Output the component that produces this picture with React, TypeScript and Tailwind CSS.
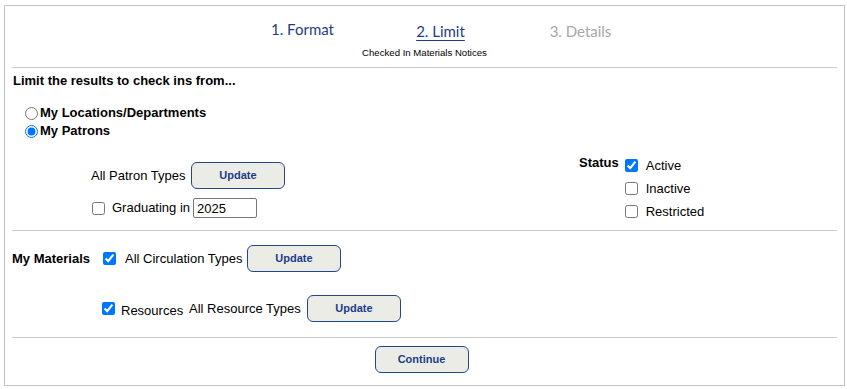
import React from "react";

const Btn = ({ label }: { label: string }) => (
  <button className="w-[94px] h-[27px] rounded-[6px] border border-[#23458f] bg-[#ecece7] text-[11px] font-bold text-[#1d3d87] leading-none [font-family:'Liberation_Sans',Arial,sans-serif]">
    {label}
  </button>
);

const Cb = ({ checked }: { checked?: boolean }) => (
  <input type="checkbox" defaultChecked={checked} className="m-0 w-[13px] h-[13px] shrink-0" />
);

export default function App() {
  return (
    <div className="bg-white w-[847px] h-[389px] pt-[5px] pl-[4px] text-[13px] text-black [font-family:'Liberation_Sans',Arial,sans-serif]">
      <div className="w-[841px] h-[381px] border border-[#c2c2c2] flex flex-col">
        {/* header */}
        <div className="pt-[16px] flex flex-col items-center">
          <div className="flex pl-[32px] text-[15px] leading-[18px] [font-family:Lato,sans-serif]">
            <div className="w-[138px] text-center text-[#1d3d87] -translate-y-[2px]">1. Format</div>
            <div className="w-[138px] text-center text-[#1d3d87]"><span className="underline underline-offset-[3px]">2. Limit</span></div>
            <div className="w-[138px] text-center text-[#a8a8a8] translate-x-[2px]">3. Details</div>
          </div>
          <div className="mt-[7px] text-[9.6px] leading-[11px]">Checked In Materials Notices</div>
        </div>
        <div className="mt-[9px] mx-[7px] border-t border-[#cccccc]" />

        {/* section 1 */}
        <div className="pt-[5px] pb-[7px]">
          <div className="pl-[8px] font-bold leading-[16px]">Limit the results to check ins from...</div>
          <div className="mt-[15px] pl-[20px] font-bold">
            <label className="flex items-center h-[18px] gap-[2px]">
              <input type="radio" name="r" className="m-0 w-[13px] h-[13px]" />
              <span>My Locations/Departments</span>
            </label>
            <label className="flex items-center h-[18px] gap-[2px]">
              <input type="radio" name="r" defaultChecked className="m-0 w-[13px] h-[13px]" />
              <span>My Patrons</span>
            </label>
          </div>
          <div className="flex">
            <div className="w-[574px] pl-[86px] mt-[22px]">
              <div className="flex items-center h-[27px] gap-[7px]">
                <span className="w-[93px] whitespace-nowrap">All Patron Types</span>
                <Btn label="Update" />
              </div>
              <div className="flex items-center mt-[9px] h-[20px]">
                <span className="ml-[1px] flex"><Cb /></span>
                <span className="ml-[7px]">Graduating in</span>
                <input
                  defaultValue="2025"
                  className="ml-[3px] w-[64px] h-[20px] border border-[#767676] rounded-[2px] px-[3px] text-[13px] outline-none"
                />
              </div>
            </div>
            <div className="mt-[14px] flex">
              <div className="font-bold h-[23px] flex items-center -translate-y-[3px]">Status</div>
              <div className="ml-[6px]">
                {[
                  ["Active", true],
                  ["Inactive", false],
                  ["Restricted", false],
                ].map(([l, c]) => (
                  <label key={l as string} className="flex items-center h-[23px] gap-[8px]">
                    <Cb checked={c as boolean} />
                    <span>{l as string}</span>
                  </label>
                ))}
              </div>
            </div>
          </div>
        </div>
        <div className="mx-[7px] border-t border-[#cccccc]" />

        {/* section 2 */}
        <div className="pb-[15px]">
          <div className="mt-[14px] pl-[7px] flex items-center h-[27px]">
            <span className="w-[91px] whitespace-nowrap font-bold">My Materials</span>
            <span className="flex"><Cb checked /></span>
            <span className="ml-[9px] w-[122px] whitespace-nowrap">All Circulation Types</span>
            <span className="flex"><Btn label="Update" /></span>
          </div>
          <div className="mt-[23px] pl-[97px] flex items-center h-[27px]">
            <Cb checked />
            <span className="ml-[6px] w-[68px] whitespace-nowrap translate-y-[2px]">Resources</span>
            <span className="w-[118px] whitespace-nowrap">All Resource Types</span>
            <span className="flex"><Btn label="Update" /></span>
          </div>
        </div>
        <div className="mx-[7px] border-t border-[#cccccc]" />
        <div className="mt-[8px] flex justify-center">
          <span className="mr-[6px] flex"><Btn label="Continue" /></span>
        </div>
      </div>
    </div>
  );
}
